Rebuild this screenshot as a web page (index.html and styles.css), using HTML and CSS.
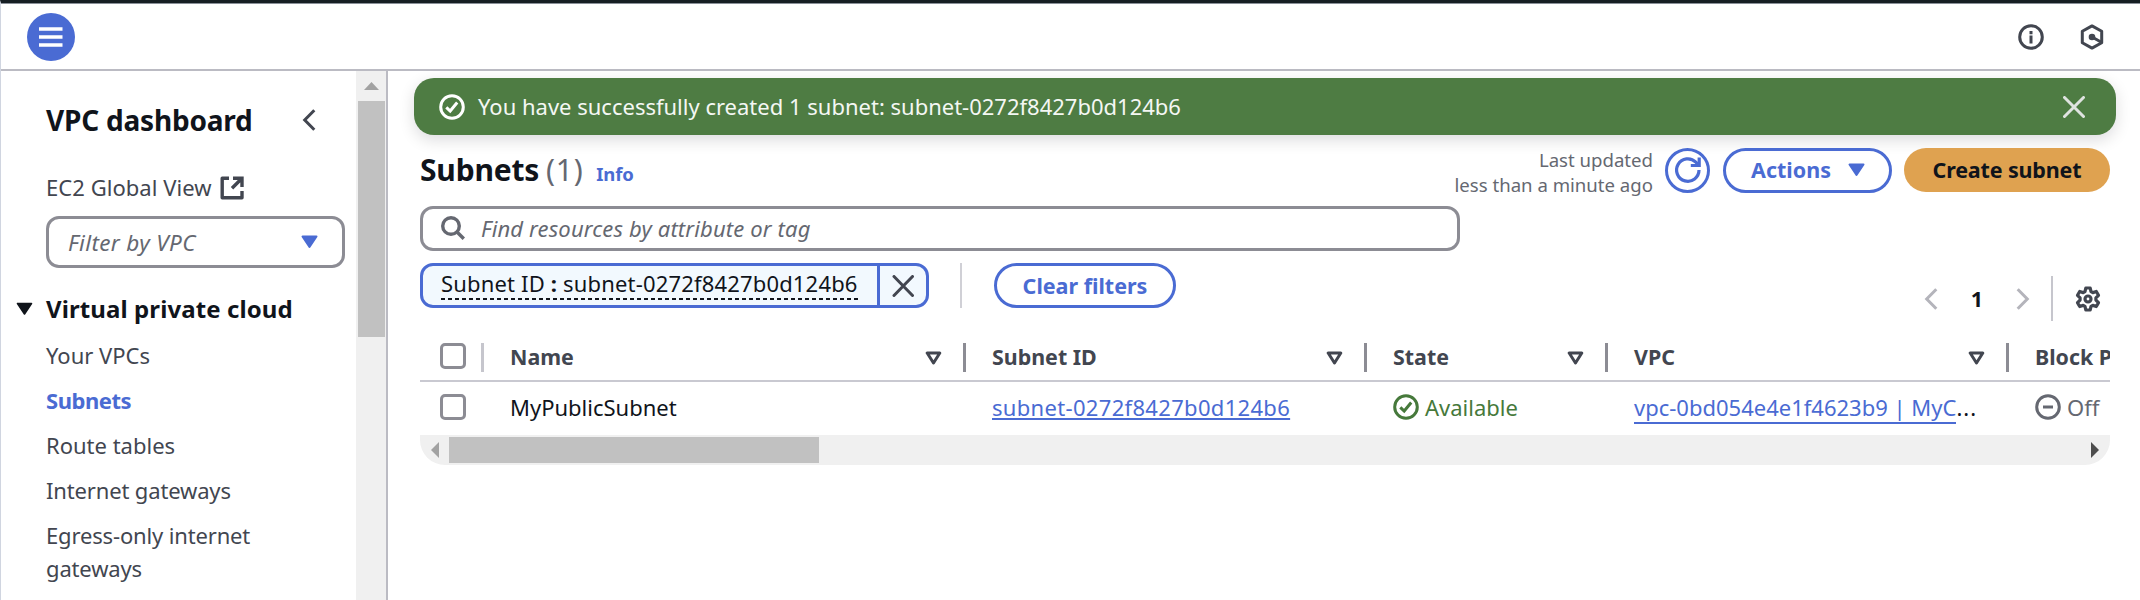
FILE: index.html
```
<!DOCTYPE html>
<html lang="en">
<head>
<meta charset="utf-8">
<title>Subnets | VPC</title>
<link rel="stylesheet" href="styles.css">
</head>
<body>
<div class="app">
  <header class="topbar">
    <button class="menu" aria-label="Menu"><svg width="24" height="20" viewBox="0 0 24 20" fill="none" stroke="#fff" stroke-width="3.6"><path d="M0 2h23.500M0 10h23.500M0 18h23.500"/></svg></button>
    <div class="tools">
      <svg width="26" height="26" viewBox="0 0 26 26" fill="none" stroke="#424650" stroke-width="3"><circle cx="13" cy="13" r="11.300"/><path d="M13 7v3.200M13 11.500v8"/></svg>
      <svg width="26" height="26" viewBox="0 0 26 26" fill="none" stroke="#424650" stroke-width="3"><path d="M13 1.900 22.700 7.200v11.600L13 24.100 3.300 18.800V7.200z" stroke-linejoin="round"/><path d="M13 13l9 5"/><circle cx="13" cy="13" r="3.300" fill="#424650" stroke="none"/></svg>
    </div>
  </header>
  <div class="body">
    <aside class="sidebar">
      <nav class="nav">
        <div class="nav-title"><span>VPC dashboard</span><svg width="14" height="22" viewBox="0 0 14 22" fill="none" stroke="#424650" stroke-width="3"><path d="M12.300 1.200 2.700 11l9.600 9.800"/></svg></div>
        <div class="nav-ec2"><span>EC2 Global View</span><svg width="24" height="24" viewBox="0 0 24 24" fill="none" stroke="#424650" stroke-width="3.400"><path d="M9 2.300H2.200v19.500H22V15" stroke-linejoin="round"/><path d="M13 2.300h9V11M21.500 2.800 12 12.300"/></svg></div>
        <div class="select"><span>Filter by VPC</span><svg width="17" height="14" viewBox="0 0 17 14"><path d="M1.500 1.500h14l-7 10.500z" fill="#4a6bd3" stroke="#4a6bd3" stroke-width="2" stroke-linejoin="round"/></svg></div>
        <div class="nav-group"><svg width="17" height="14" viewBox="0 0 17 14"><path d="M1.500 1.500h14l-7 10.500z" fill="#10141b" stroke="#10141b" stroke-width="1.600" stroke-linejoin="round"/></svg><span>Virtual private cloud</span></div>
        <ul class="nav-list">
          <li>Your VPCs</li>
          <li class="current">Subnets</li>
          <li>Route tables</li>
          <li class="tight">Internet gateways</li>
          <li class="tight">Egress-only internet gateways</li>
        </ul>
      </nav>
      <div class="vscroll"><div class="vscroll-btn"><svg width="15" height="8" viewBox="0 0 15 8"><path d="M7.500 0 15 8H0z" fill="#a2a2a2"/></svg></div><div class="vscroll-thumb"></div></div>
    </aside>
    <main class="main">
      <div class="flash">
        <svg width="26" height="26" viewBox="0 0 26 26" fill="none" stroke="#fff" stroke-width="3"><circle cx="13" cy="13" r="11.300"/><path d="M7.300 13.300l3.900 3.700 7-8.500"/></svg>
        <span class="flash-text">You have successfully created 1 subnet: subnet-0272f8427b0d124b6</span>
        <svg width="22" height="22" viewBox="0 0 22 22" fill="none" stroke="#dfe3e0" stroke-width="3" stroke-linecap="round"><path d="M1.500 1.500l19 19M20.500 1.500l-19 19"/></svg>
      </div>
      <section class="panel">
        <div class="heading">
          <h1>Subnets</h1><span class="count">(1)</span><a class="info">Info</a>
          <div class="updated">Last updated<br>less than a minute ago</div>
          <button class="btn round"><svg width="26" height="26" viewBox="0 0 26 26" fill="none" stroke="#4a6bd3" stroke-width="3.200"><path d="M24 13A11.200 11.200 0 1 1 20.800 5.200L23.500 8"/><path d="M24.200.500V8.500H15.800"/></svg></button>
          <button class="btn actions"><span>Actions</span><svg width="17" height="14" viewBox="0 0 17 14"><path d="M1.500 1.500h14l-7 10.500z" fill="#4a6bd3" stroke="#4a6bd3" stroke-width="2" stroke-linejoin="round"/></svg></button>
          <button class="btn primary">Create subnet</button>
        </div>
        <div class="toolbar">
          <div class="filters">
            <div class="search"><svg width="24" height="24" viewBox="0 0 24 24" fill="none" stroke="#656871" stroke-width="3.400"><circle cx="10" cy="10" r="8.300"/><path d="M15.800 15.800l7 7"/></svg><span>Find resources by attribute or tag</span></div>
            <div class="tokens">
              <div class="token"><div class="token-label"><span>Subnet ID <b>:</b> subnet-0272f8427b0d124b6</span></div><div class="token-x"><svg width="22" height="22" viewBox="0 0 22 22" fill="none" stroke="#424650" stroke-width="3" stroke-linecap="round"><path d="M2 1.500l18.500 19M20.500 1.500L2 20.500"/></svg></div></div>
              <div class="sep"></div>
              <button class="btn clear">Clear filters</button>
            </div>
          </div>
          <div class="pager">
            <svg width="14" height="22" viewBox="0 0 14 22" fill="none" stroke="#b4b4bb" stroke-width="3"><path d="M12.300 1.200 2.700 11l9.600 9.800"/></svg>
            <span class="page">1</span>
            <svg width="14" height="22" viewBox="0 0 14 22" fill="none" stroke="#b4b4bb" stroke-width="3"><path d="M1.700 1.200 11.300 11l-9.600 9.800"/></svg>
            <div class="pager-sep"></div>
            <svg width="26" height="26" viewBox="0 0 26 26" fill="none" stroke="#424650" stroke-width="3.200" stroke-linejoin="round"><path d="M10.800 2h4.400l.8 3.600 1.800 1 3.500-1.100 2.200 3.800-2.600 2.600v2.200l2.600 2.600-2.200 3.800-3.500-1.100-1.800 1-.8 3.600h-4.400l-.8-3.600-1.800-1-3.500 1.100-2.200-3.800 2.600-2.600v-2.200L2.500 9.300l2.200-3.800 3.500 1.100 1.800-1z"/><circle cx="13" cy="13" r="3"/></svg>
          </div>
        </div>
        <div class="table">
          <div class="row head">
            <div class="cell check"><i class="box"></i></div>
            <div class="cell"><span>Name</span><svg class="sort" width="17" height="14" viewBox="0 0 17 14"><path d="M2.200 2h12.600L8.500 12z"/></svg></div>
            <div class="cell"><span>Subnet ID</span><svg class="sort" width="17" height="14" viewBox="0 0 17 14"><path d="M2.200 2h12.600L8.500 12z"/></svg></div>
            <div class="cell"><span>State</span><svg class="sort" width="17" height="14" viewBox="0 0 17 14"><path d="M2.200 2h12.600L8.500 12z"/></svg></div>
            <div class="cell"><span>VPC</span><svg class="sort" width="17" height="14" viewBox="0 0 17 14"><path d="M2.200 2h12.600L8.500 12z"/></svg></div>
            <div class="cell last"><span>Block P</span></div>
          </div>
          <div class="row data">
            <div class="cell check"><i class="box"></i></div>
            <div class="cell">MyPublicSubnet</div>
            <div class="cell"><a class="subnet-link">subnet-0272f8427b0d124b6</a></div>
            <div class="cell state"><svg width="26" height="26" viewBox="0 0 26 26" fill="none" stroke="#46793b" stroke-width="3"><circle cx="13" cy="13" r="11.300"/><path d="M7.300 13.300l3.900 3.700 7-8.500"/></svg><span>Available</span></div>
            <div class="cell"><a class="vpc-link">vpc-0bd054e4e1f4623b9 | MyC</a><span class="dots">...</span></div>
            <div class="cell off"><svg width="26" height="26" viewBox="0 0 26 26" fill="none" stroke="#656871" stroke-width="3"><circle cx="13" cy="13" r="11.300"/><path d="M8 13h10"/></svg><span>Off</span></div>
          </div>
          <div class="hscroll"><svg width="8" height="16" viewBox="0 0 8 16"><path d="M8 0v16L0 8z" fill="#a2a2a2"/></svg><div class="hscroll-thumb"></div><svg width="8" height="16" viewBox="0 0 8 16"><path d="M0 0v16l8-8z" fill="#4d4d4d"/></svg></div>
        </div>
      </section>
    </main>
  </div>
</div>
</body>
</html>
```
FILE: styles.css
```
* { box-sizing: border-box; }
body { margin: 0; background: #fff; }
svg { display: block; flex: none; }
button { margin: 0; padding: 0; border: 0; background: none; font: inherit; color: inherit; }

.app {
  width: 2140px; height: 600px; overflow: hidden;
  display: flex; flex-direction: column;
  border-top: 3px solid #161e23; border-left: 1px solid #d0d5e0;
  font: 22px/33px "Noto Sans", "Open Sans", sans-serif; color: #10141b;
}
.topbar {
  height: 68px; flex: none; display: flex; align-items: center; justify-content: space-between;
  padding: 0 35px 0 26px; border-top: 1px solid #8a9099; border-bottom: 2px solid #bbbbc3;
}
.menu {
  width: 48px; height: 48px; border-radius: 50%; background: #4a6bd3;
  display: flex; align-items: center; justify-content: center;
}
.tools { display: flex; gap: 35px; }
.body { flex: 1; display: flex; min-height: 0; }

.sidebar { width: 387px; flex: none; display: flex; border-right: 2px solid #bbbbc3; color: #424650; }
.nav { width: 355px; padding: 30px 11px 0 45px; }
.nav-title {
  display: flex; align-items: center; justify-content: space-between; padding-right: 29px;
  font-size: 28px; font-weight: 700; line-height: 38px; letter-spacing: -0.2px; color: #10141b;
}
.nav-ec2 { display: flex; align-items: center; gap: 8px; margin-top: 32px; letter-spacing: 0.05px; }
.select {
  height: 52px; margin-top: 12px; padding: 0 24px 0 19px;
  display: flex; align-items: center; justify-content: space-between;
  border: 3px solid #8c8c94; border-radius: 13px;
  font-size: 22.5px; font-style: italic; letter-spacing: 0.35px; color: #656871;
}
.nav-group {
  display: flex; align-items: center; gap: 13px; margin: 24px 0 13px -30px;
  font-size: 24px; font-weight: 700; line-height: 34px; letter-spacing: 0.1px; color: #10141b;
}
.nav-list { margin: 0; padding: 0; list-style: none; display: flex; flex-direction: column; gap: 12px; }
.nav-list .current { font-weight: 700; letter-spacing: -0.45px; color: #4a6bd3; }
.nav-list .tight { letter-spacing: -0.15px; width: 250px; }
.vscroll { width: 30px; background: #f0f0f0; padding: 0 1.500px; }
.vscroll-btn { height: 30px; display: flex; align-items: center; justify-content: center; }
.vscroll-thumb { height: 236px; background: #c1c1c1; }

.main { flex: 1; min-width: 0; padding: 7px 24px 0 26px; }
.flash {
  height: 57px; display: flex; align-items: center; padding: 0 31px 0 25px;
  background: #4e7c43; color: #f4f7f3; border-radius: 20px;
  box-shadow: 0 5px 16px rgba(0, 7, 22, 0.14);
}
.flash-text { flex: 1; margin: -1px 0 0 13px; }
.panel { width: 1690px; margin-left: 6px; padding-top: 13px; }
.heading { height: 44px; display: flex; align-items: center; }
h1 { margin: 0; font-size: 30px; line-height: 44px; letter-spacing: -0.2px; }
.count { margin-left: 7px; font-size: 30px; line-height: 44px; letter-spacing: 0.7px; color: #656871; }
.info { margin: 7px 0 0 13px; font-size: 18.5px; font-weight: 700; letter-spacing: -0.2px; color: #4a6bd3; }
.updated { margin: 4px 12px 0 auto; font-size: 18.6px; line-height: 25.500px; text-align: right; color: #656871; }
.btn {
  height: 45px; flex: none; display: flex; align-items: center; justify-content: center;
  border: 3px solid #4a6bd3; border-radius: 23px;
  font-size: 21.5px; font-weight: 700; line-height: 33px; white-space: nowrap; color: #4a6bd3;
}
.round { width: 45px; }
.actions { width: 169px; margin-left: 13px; gap: 17px; padding-left: 1px; }
.actions span, .clear { padding-bottom: 1px; }
.primary { width: 206px; height: 44px; margin-left: 12px; border: 0; padding-bottom: 1px; background: #dfa250; color: #10141b; letter-spacing: -0.15px; }
.clear { width: 182px; }

.toolbar { display: flex; align-items: flex-end; justify-content: space-between; margin-top: 14px; }
.filters { width: 1040px; padding-bottom: 13px; }
.search {
  height: 45px; display: flex; align-items: center; gap: 16px; padding: 0 0 1px 18px;
  border: 3px solid #8c8c94; border-radius: 13px; color: #656871; font-style: italic; letter-spacing: 0.15px;
}
.tokens { display: flex; align-items: center; margin-top: 12px; }
.token { width: 509px; height: 45px; display: flex; border: 3px solid #4a6bd3; border-radius: 13px; background: #f2f9fe; overflow: hidden; }
.token-label { width: 457px; border-right: 3px solid #4a6bd3; padding: 4px 0 0 18px; letter-spacing: 0.17px; white-space: nowrap; }
.token-label span {
  display: block; width: 417px; height: 30px; line-height: 27px;
  background: repeating-linear-gradient(90deg, #10141b 0 4px, transparent 4px 7px) bottom / 100% 2px no-repeat;
}
.token-x { flex: 1; display: flex; align-items: center; justify-content: center; }
.sep { width: 2px; height: 45px; margin: 0 32px 0 31px; background: #d0d0d6; }
.pager { height: 45px; display: flex; align-items: center; padding-right: 9px; }
.page { width: 78px; text-align: center; font-weight: 700; font-size: 21.5px; }
.pager-sep { width: 2px; height: 45px; margin: 0 22px 0 21px; background: #c6c6cd; }

.table { margin-top: 14px; }
.row { display: grid; grid-template-columns: 64px 482px 401px 241px 401px 101px; overflow: hidden; }
.cell { display: flex; align-items: center; padding-left: 26px; white-space: nowrap; min-width: 0; }
.head { height: 47px; border-bottom: 2px solid #c9c9d1; font-size: 21.4px; font-weight: 700; color: #424650; }
.head .cell { justify-content: space-between; height: 29px; margin-top: 8px; padding-right: 21px; border-right: 3px solid #8c8c94; }
.head .cell span { margin-top: -2px; }
.head .check { border-right-color: #c6c6cd; }
.head .last { border-right: 0; padding-right: 0; }
.sort { fill: none; stroke: #424650; stroke-width: 3; stroke-linejoin: round; }
.row .check { padding: 0 0 0 20px; }
.box { width: 26px; height: 26px; border: 3px solid #8c8c94; border-radius: 5px; }
.head .box { margin-top: -3px; }
.data { height: 50px; }
.subnet-link { color: #4a6bd3; letter-spacing: 0.32px; text-decoration: underline; text-decoration-thickness: 2px; text-underline-offset: 2px; }
.vpc-link { color: #4a6bd3; border-bottom: 2px solid #4a6bd3; line-height: 30px; margin-top: 2px; }
.dots { letter-spacing: 1px; }
.state { gap: 6px; color: #46793b; }
.off { gap: 6px; color: #656871; }
.hscroll { height: 30px; padding: 0 11px; display: flex; align-items: center; background: #f0f0f0; border-radius: 0 0 25px 25px; margin-top: 3px; }
.hscroll-thumb { width: 370px; height: 26px; margin: 0 auto 0 10px; background: #c1c1c1; }
```
